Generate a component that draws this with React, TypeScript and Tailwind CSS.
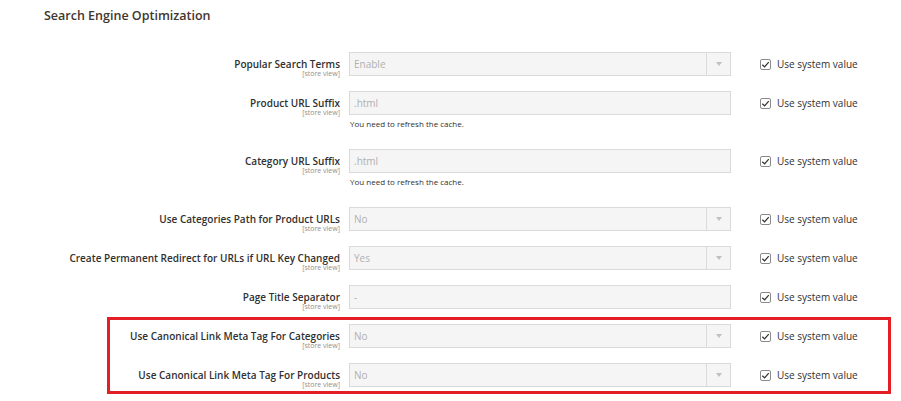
const rows = [
  { label: "Popular Search Terms", value: "Enable", select: true },
  { label: "Product URL Suffix", value: ".html", note: true },
  { label: "Category URL Suffix", value: ".html", note: true },
  { label: "Use Categories Path for Product URLs", value: "No", select: true },
  { label: "Create Permanent Redirect for URLs if URL Key Changed", value: "Yes", select: true },
  { label: "Page Title Separator", value: "-" },
  { label: "Use Canonical Link Meta Tag For Categories", value: "No", select: true },
  { label: "Use Canonical Link Meta Tag For Products", value: "No", select: true },
];

function Check() {
  return (
    <span className="w-[11px] h-[11px] border border-[#8a8a8a] rounded-[2px] bg-white flex items-center justify-center">
      <svg width="9" height="9" viewBox="0 0 10 10">
        <path d="M1.5 5.2 L4 7.6 L8.6 2.4" fill="none" stroke="#303030" strokeWidth="1.4" />
      </svg>
    </span>
  );
}

export default function App() {
  return (
    <main
      className="relative w-[901px] h-[401px] bg-white overflow-hidden text-[#303030]"
      style={{ fontFamily: '"Open Sans", sans-serif' }}
    >
      <h2 className="absolute left-[44px] top-[7px] text-[12.5px] font-semibold text-[#41362f]">Search Engine Optimization</h2>
      <div className="pt-[52px] flex flex-col">
        {rows.map((r) => (
          <div key={r.label} className={r.note ? "mb-[19px]" : "mb-[15px]"}>
            <div className="flex items-start h-[24px]">
              <div className="w-[340px] text-right leading-none pt-[7px]">
                <div className="text-[10px] font-semibold">{r.label}</div>
                <div className="text-[7px] text-[#909090] mt-[1px]">[store view]</div>
              </div>
              <div className="ml-[9px] w-[382px] h-[24px] border border-[#dadada] bg-[#f5f5f5] flex items-center text-[10px] text-[#b0b0b0] pl-[4px]">
                <span className="flex-1">{r.value}</span>
                {r.select && (
                  <span className="w-[24px] h-full border-l border-[#dadada] flex items-center justify-center">
                    <svg width="6" height="4" viewBox="0 0 6 4"><path d="M0 0h6L3 4z" fill="#c0c0c0" /></svg>
                  </span>
                )}
              </div>
              <div className="ml-[29px] flex items-center h-[24px] gap-[6px]">
                <Check />
                <span className="text-[10px] text-[#303030]">Use system value</span>
              </div>
            </div>
            {r.note && <div className="ml-[350px] mt-[3px] h-[12px] leading-[12px] text-[8px] text-[#303030]">You need to refresh the cache.</div>}
          </div>
        ))}
      </div>
      <div className="absolute left-[107px] top-[317px] w-[784px] h-[77px] border-[3px] border-[#e31e24]" />
    </main>
  );
}
